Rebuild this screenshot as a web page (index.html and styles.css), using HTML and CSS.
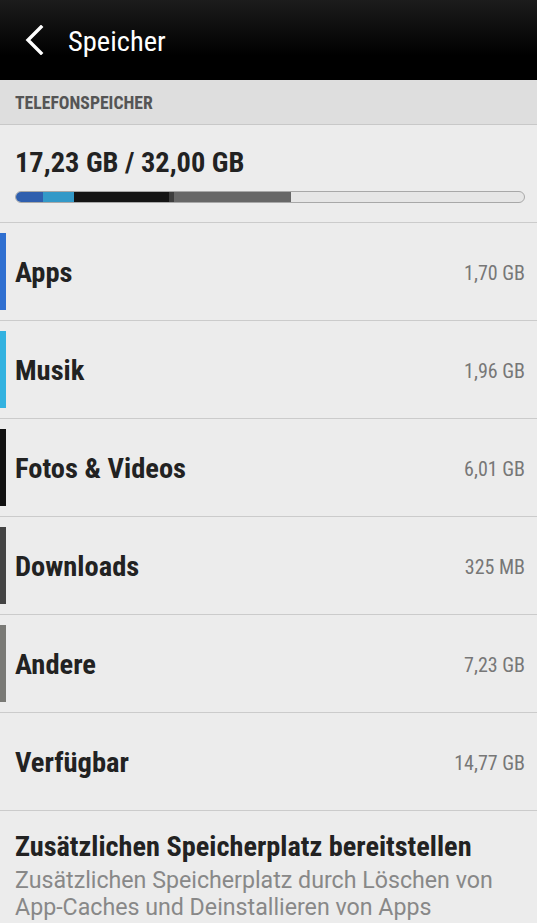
FILE: index.html
```html
<!DOCTYPE html>
<html lang="de">
<head>
<meta charset="utf-8">
<link rel="stylesheet" href="styles.css">
</head>
<body>
<header class="appbar">
  <svg class="back" width="24" height="30" viewBox="0 0 24 30"><path d="M19 2 L6 15 L19 28" fill="none" stroke="#fff" stroke-width="3.4" stroke-linecap="square"/></svg>
  <span class="appbar-title">Speicher</span>
</header>
<div class="section-head">TELEFONSPEICHER</div>
<div class="summary">
  <div class="summary-total">17,23 GB / 32,00 GB</div>
  <div class="bar">
    <span class="seg seg-apps" style="width:27px"></span>
    <span class="seg seg-music" style="width:31px"></span>
    <span class="seg seg-photos" style="width:95px"></span>
    <span class="seg seg-dl" style="width:5px"></span>
    <span class="seg seg-other" style="width:117px"></span>
  </div>
</div>
<ul class="list">
  <li class="row"><span class="swatch sw-apps"></span><span class="row-title">Apps</span><span class="row-value">1,70 GB</span></li>
  <li class="row"><span class="swatch sw-music"></span><span class="row-title">Musik</span><span class="row-value">1,96 GB</span></li>
  <li class="row"><span class="swatch sw-photos"></span><span class="row-title">Fotos &amp; Videos</span><span class="row-value">6,01 GB</span></li>
  <li class="row"><span class="swatch sw-dl"></span><span class="row-title">Downloads</span><span class="row-value">325 MB</span></li>
  <li class="row"><span class="swatch sw-other"></span><span class="row-title">Andere</span><span class="row-value">7,23 GB</span></li>
  <li class="row"><span class="row-title">Verfügbar</span><span class="row-value">14,77 GB</span></li>
</ul>
<div class="extra">
  <div class="extra-title">Zusätzlichen Speicherplatz bereitstellen</div>
  <div class="extra-sub">Zusätzlichen Speicherplatz durch Löschen von<br>App-Caches und Deinstallieren von Apps</div>
</div>
</body>
</html>
```
FILE: styles.css
```css
html, body {
  margin: 0;
  padding: 0;
}
body {
  background: #ececec;
  font-family: "Roboto Condensed", Roboto, "Liberation Sans", sans-serif;
  color: #222;
  width: 537px;
  height: 923px;
  overflow: hidden;
}
.appbar {
  height: 80px;
  background: linear-gradient(#1c1c1c, #000 70%);
  display: flex;
  align-items: center;
  padding-left: 22px;
  box-sizing: border-box;
}
.back {
  display: block;
  margin-top: 0;
}
.appbar-title {
  color: #fff;
  font-size: 28.5px;
  font-stretch: 80%;
  margin-left: 22px;
  margin-top: 2px;
}
.section-head {
  height: 45px;
  background: #dedede;
  border-bottom: 1px solid #c8c8c8;
  color: #555;
  font-weight: 700;
  font-size: 17.7px;
  font-stretch: 80%;
  display: flex;
  align-items: center;
  padding-left: 15px;
  box-sizing: border-box;
  padding-top: 2px;
}
.summary {
  height: 98px;
  border-bottom: 1px solid #cbcbcb;
  box-sizing: border-box;
  padding: 21px 12px 0 15px;
}
.summary-total {
  font-size: 28.4px;
  font-weight: 700;
  font-stretch: 80%;
  color: #222;
  line-height: 34px;
}
.bar {
  margin-top: 11px;
  height: 12px;
  border-radius: 6px;
  background: #e6e6e6;
  border: 1px solid #a8a8a8;
  box-sizing: border-box;
  display: flex;
  overflow: hidden;
}
.seg {
  height: 100%;
  display: block;
}
.seg-apps { background: #2f5fae; }
.seg-music { background: #3399c8; }
.seg-photos { background: #151515; }
.seg-dl { background: #3e3e3e; }
.seg-other { background: #676767; }
.list {
  list-style: none;
  margin: 0;
  padding: 0;
}
.row {
  height: 98px;
  border-bottom: 1px solid #cbcbcb;
  box-sizing: border-box;
  display: flex;
  align-items: center;
  position: relative;
  padding: 2px 12px 0 15px;
}
.swatch {
  position: absolute;
  left: 0;
  top: 10px;
  bottom: 10px;
  width: 6px;
}
.sw-apps { background: #2f6fd0; }
.sw-music { background: #33b2e0; }
.sw-photos { background: #111; }
.sw-dl { background: #444; }
.sw-other { background: #7a7a76; }
.row-title {
  flex: 1;
  font-size: 28.5px;
  font-weight: 700;
  font-stretch: 80%;
  color: #222;
}
.row-value {
  font-size: 20px;
  font-stretch: 80%;
  color: #777;
}
.extra {
  padding: 19px 15px 0 15px;
}
.extra-title {
  font-size: 28.3px;
  font-weight: 700;
  font-stretch: 80%;
  color: #222;
  line-height: 34px;
}
.extra-sub {
  font-family: Roboto, "Liberation Sans", sans-serif;
  font-size: 23.2px;
  color: #888;
  line-height: 27px;
  margin-top: 3px;
}
```
